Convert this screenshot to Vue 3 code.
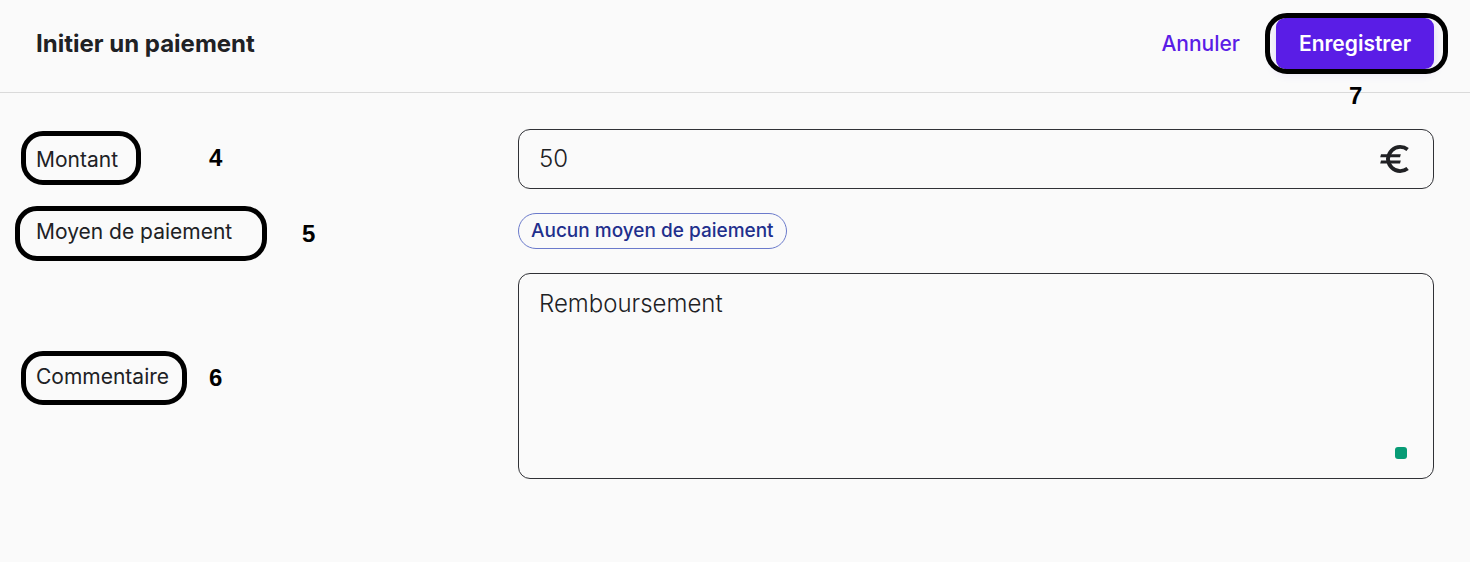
<script setup>
import { ref } from 'vue'

const amount = ref('50')
const comment = ref('Remboursement')
</script>

<template>
  <form class="page" @submit.prevent>
    <header class="bar">
      <h1>Initier un paiement</h1>
      <div class="actions">
        <button type="button" class="cancel">Annuler</button>
        <div class="anchor">
          <button type="submit" class="save">Enregistrer</button>
          <span class="ring ring-save"></span>
          <span class="step step-save">7</span>
        </div>
      </div>
    </header>

    <main class="fields">
      <div class="anchor">
        <label for="amount">Montant</label>
        <span class="ring ring-amount"></span>
        <span class="step step-amount">4</span>
      </div>
      <div class="amount">
        <input id="amount" v-model="amount" type="text" inputmode="decimal" />
        <svg class="euro" viewBox="0 0 30 28" aria-hidden="true">
          <path d="M27.600 4.400C25.600 2.800 23.300 1.900 20.100 1.900C13.600 1.900 8.500 7 7.900 14C8.500 21 13.600 26.100 20.100 26.100C23.300 26.100 25.600 25.200 27.600 23.600" fill="none" stroke="#202124" stroke-width="3.800" />
          <path d="M1 9.200H20.800L20 12.200H.200ZM1 15.600H20.800L20 18.600H.200Z" fill="#202124" />
        </svg>
      </div>

      <div class="anchor">
        <span id="method" class="label">Moyen de paiement</span>
        <span class="ring ring-method"></span>
        <span class="step step-method">5</span>
      </div>
      <div><span class="chip" aria-labelledby="method">Aucun moyen de paiement</span></div>

      <div class="anchor">
        <label for="comment">Commentaire</label>
        <span class="ring ring-comment"></span>
        <span class="step step-comment">6</span>
      </div>
      <div class="comment">
        <textarea id="comment" v-model="comment" spellcheck="false"></textarea>
        <span class="marker"></span>
      </div>
    </main>
  </form>
</template>

<style>
body {
  background: #fafafa;
}
</style>

<style scoped>
.page {
  color: #202124;
  font-family: Inter, "Liberation Sans", sans-serif;
}

.page * {
  box-sizing: border-box;
}

.bar {
  display: flex;
  align-items: center;
  justify-content: space-between;
  padding: 18px 36px 23px;
  border-bottom: 1px solid #dadada;
}

h1 {
  margin: 0;
  font-size: 24px;
  line-height: 30px;
  font-weight: 700;
}

.actions {
  display: flex;
  align-items: center;
  gap: 36px;
}

button {
  display: block;
  height: 51px;
  border: 0;
  font: 500 21px/30px Inter, "Liberation Sans", sans-serif;
  cursor: pointer;
}

.cancel {
  padding: 0;
  background: none;
  color: #5a1de6;
}

.save {
  padding: 0 23px;
  border-radius: 9px;
  background: #5a1de6;
  color: #fff;
  font-weight: 600;
  box-shadow: 0 3px 12px rgba(90, 29, 230, 0.16);
}

.fields {
  display: grid;
  grid-template-columns: 1fr 2fr;
  align-items: center;
  gap: 24px;
  padding: 36px;
}

.anchor {
  position: relative;
}

label,
.label {
  display: block;
  padding-top: 2px;
  font-size: 21px;
  line-height: 30px;
}

.amount,
.comment {
  position: relative;
  display: flex;
}

input,
textarea {
  width: 100%;
  margin: 0;
  border: 1px solid #303136;
  border-radius: 12px;
  outline: 0;
  background: transparent;
  color: #202124;
  font: 300 24px/30px Inter, "Liberation Sans", sans-serif;
}

input {
  height: 60px;
  padding: 0 60px 2px 20px;
}

textarea {
  height: 206px;
  padding: 15px 20px;
  resize: none;
}

.euro {
  position: absolute;
  top: 16px;
  right: 24px;
  width: 30px;
  height: 28px;
}

.marker {
  position: absolute;
  right: 27px;
  bottom: 20px;
  width: 12px;
  height: 12px;
  border-radius: 3px;
  background: #079b75;
}

.chip {
  display: inline-block;
  height: 36px;
  padding: 0 12px;
  border: 1px solid #6b7acb;
  border-radius: 18px;
  color: #1f2f8c;
  font-size: 19px;
  font-weight: 500;
  line-height: 34px;
  vertical-align: top;
}

.ring {
  position: absolute;
  border: 5px solid #000;
  border-radius: 22px;
  pointer-events: none;
}

.ring-save {
  inset: -5px -14px -5px -11px;
}

.ring-amount {
  top: -12px;
  left: -15px;
  width: 120px;
  height: 54px;
}

.ring-method {
  top: -9px;
  left: -21px;
  width: 252px;
  height: 55px;
}

.ring-comment {
  top: -9px;
  left: -15px;
  width: 166px;
  height: 54px;
}

.step {
  position: absolute;
  color: #000;
  font: 700 24px/30px "Liberation Sans", Arial, sans-serif;
}

.step-save {
  top: 63px;
  left: 73px;
}

.step-amount {
  top: 0;
  left: 173px;
}

.step-method {
  top: 4px;
  left: 266px;
}

.step-comment {
  top: 3px;
  left: 173px;
}
</style>
